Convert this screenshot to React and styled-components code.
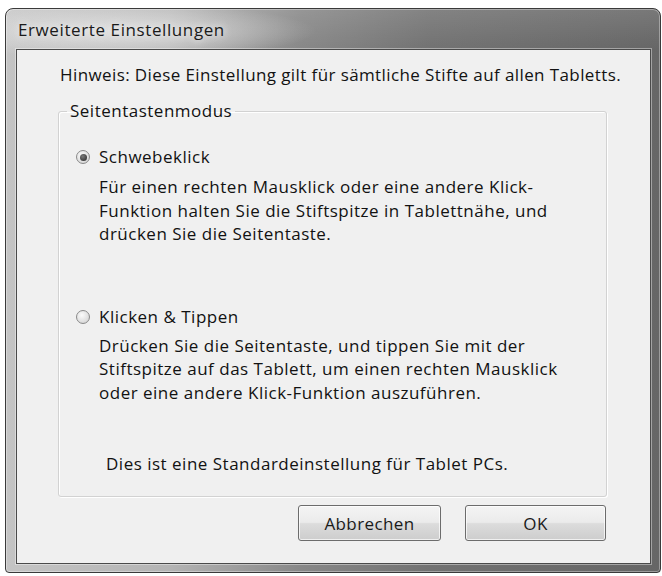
import React from 'react';
import styled, { createGlobalStyle } from 'styled-components';

const GlobalStyle = createGlobalStyle`
  html, body {
    margin: 0;
    padding: 0;
    background: #ffffff;
  }
  body {
    font-family: "Open Sans", "Noto Sans", "DejaVu Sans", sans-serif;
    color: #121212;
  }
`;

const Page = styled.div`
  width: 662px;
  height: 576px;
  box-sizing: border-box;
  padding: 8px 1px 3px 5px;
  display: flex;
`;

const Window = styled.div`
  flex: 1;
  display: flex;
  flex-direction: column;
  box-sizing: border-box;
  border: 1px solid #3a3a3a;
  border-radius: 8px 8px 4px 4px;
  padding: 0 9px 8px 10px;
  background:
    radial-gradient(ellipse 200px 28px at 110px 22px, rgba(235, 235, 235, 0.75), rgba(235, 235, 235, 0) 100%),
    linear-gradient(to bottom, rgba(255, 255, 255, 0.12), rgba(0, 0, 0, 0) 40px),
    linear-gradient(to right, #c4c4c4 0%, #b4b4b4 25%, #888888 45%, #727272 65%, #666666 100%);
  box-shadow: inset 0 0 0 1px rgba(255, 255, 255, 0.35);
`;

const TitleBar = styled.div`
  height: 40px;
  display: flex;
  align-items: center;
  padding-left: 2px;
`;

const Title = styled.span`
  font-size: 17px;
  color: #1a1a1a;
  letter-spacing: 0.6px;
  text-shadow: 0 0 6px #ececec, 0 0 10px #e4e4e4;
`;

const Client = styled.div`
  flex: 1;
  display: flex;
  flex-direction: column;
  background: #f0f0f0;
  border: 1px solid #4a4a4a;
  box-shadow: 0 0 0 1px rgba(255, 255, 255, 0.4);
  padding: 14px 43px 0 41px;
`;

const Note = styled.p`
  margin: 0 -30px 14px 2px;
  white-space: nowrap;
  font-size: 17px;
  line-height: 22px;
  letter-spacing: 0.4px;
`;

const Group = styled.fieldset`
  margin: 0;
  padding: 24px 16px 21px 16px;
  border: 1px solid #d2d2d2;
  border-radius: 3px;
  box-shadow: inset 1px 1px 0 #ffffff, 1px 1px 0 #ffffff;
`;

const Legend = styled.legend`
  margin-left: -8px;
  padding: 0 3px;
  font-size: 17px;
  line-height: 22px;
  letter-spacing: 0.5px;
`;

const Option = styled.div`
  display: flex;
  flex-direction: column;
  margin-top: ${(p) => p.$top}px;
`;

const RadioRow = styled.label`
  display: flex;
  align-items: center;
  gap: 9px;
  margin-left: 1px;
  font-size: 17px;
  line-height: 22px;
  letter-spacing: 0.5px;
`;

const RadioMark = styled.span`
  width: 14px;
  height: 14px;
  border-radius: 50%;
  box-sizing: border-box;
  border: 1px solid #8a8a8a;
  background: radial-gradient(circle at 40% 35%, #fbfbfb 0%, #e0e0e0 60%, #c8c8c8 100%);
  display: flex;
  align-items: center;
  justify-content: center;

  &::after {
    content: '';
    width: 7px;
    height: 7px;
    border-radius: 50%;
    background: radial-gradient(circle at 40% 35%, #7a7a7a, #262626);
    display: ${(p) => (p.$checked ? 'block' : 'none')};
  }
`;

const Description = styled.p`
  margin: ${(p) => p.$gap}px 0 0 24px;
  font-size: 17px;
  line-height: 23.5px;
  letter-spacing: 0.5px;
`;

const Footnote = styled.p`
  margin: 49px 0 0 31px;
  font-size: 17px;
  line-height: 22px;
  letter-spacing: 0.5px;
`;

const ButtonRow = styled.div`
  display: flex;
  justify-content: flex-end;
  gap: 24px;
  margin-top: 8px;
  padding-right: 1px;
`;

const Button = styled.button`
  width: ${(p) => p.$w}px;
  height: 36px;
  font-family: inherit;
  font-size: 17px;
  letter-spacing: 0.4px;
  color: #1a1a1a;
  border: 1px solid #6c6c6c;
  border-radius: 3px;
  background: linear-gradient(to bottom, #f4f4f4 0%, #ebebeb 48%, #dcdcdc 52%, #cdcdcd 100%);
  box-shadow: inset 0 0 0 1px rgba(255, 255, 255, 0.7);
  padding: 0;
`;

export default function App() {
  return (
    <>
      <GlobalStyle />
      <Page>
        <Window>
          <TitleBar>
            <Title>Erweiterte Einstellungen</Title>
          </TitleBar>
          <Client>
            <Note>Hinweis: Diese Einstellung gilt für sämtliche Stifte auf allen Tabletts.</Note>
            <Group>
              <Legend>Seitentastenmodus</Legend>
              <Option $top={0}>
                <RadioRow>
                  <RadioMark $checked />
                  Schwebeklick
                </RadioRow>
                <Description $gap={7}>
                  Für einen rechten Mausklick oder eine andere Klick-
                  <br />
                  Funktion halten Sie die Stiftspitze in Tablettnähe, und
                  <br />
                  drücken Sie die Seitentaste.
                </Description>
              </Option>
              <Option $top={60}>
                <RadioRow>
                  <RadioMark />
                  Klicken &amp; Tippen
                </RadioRow>
                <Description $gap={6}>
                  Drücken Sie die Seitentaste, und tippen Sie mit der
                  <br />
                  Stiftspitze auf das Tablett, um einen rechten Mausklick
                  <br />
                  oder eine andere Klick-Funktion auszuführen.
                </Description>
              </Option>
              <Footnote>Dies ist eine Standardeinstellung für Tablet PCs.</Footnote>
            </Group>
            <ButtonRow>
              <Button $w={143}>Abbrechen</Button>
              <Button $w={141}>OK</Button>
            </ButtonRow>
          </Client>
        </Window>
      </Page>
    </>
  );
}
